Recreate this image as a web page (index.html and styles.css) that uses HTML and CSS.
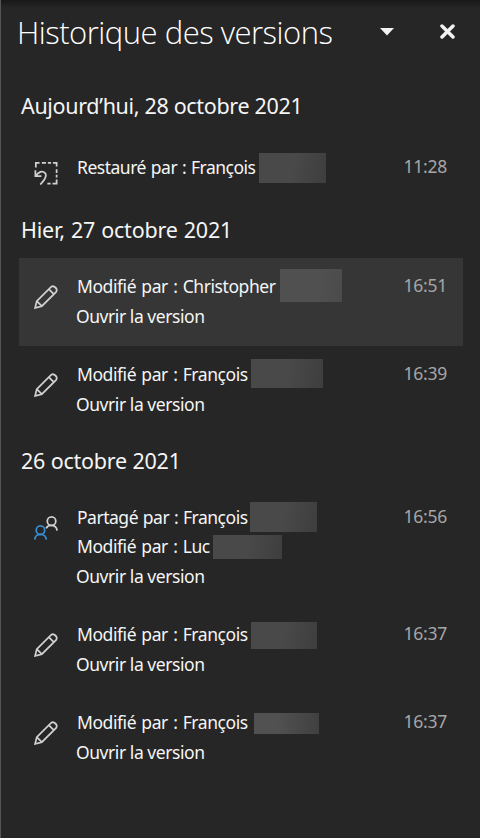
FILE: index.html
```html
<!DOCTYPE html>
<html lang="fr">
<head>
<meta charset="utf-8">
<title>Historique des versions</title>
<link rel="stylesheet" href="styles.css">
</head>
<body>
<svg class="defs" aria-hidden="true">
  <symbol id="pencil" viewBox="0 0 26 26">
    <path d="M1.2 24.8 3 17.5 18.5 2Q20.8.4 23.2 2.7T24 7.4L8.5 23Z M3 17.5 8.5 23 M16 4.5 21.5 10"/>
  </symbol>
  <symbol id="restore" viewBox="0 0 26 26">
    <path d="M2 7V2H6 M8.5 2H13 M15 2H18.5 M20.5 2H24.5V6 M24.5 9V13 M24.5 15V18 M24.5 20V24.5H20 M18 24.5H14.5 M1.5 10V16.5H8 M1.5 16.5C5 11.5 9 10 11.8 12.8S12 20 6.8 25.5"/>
  </symbol>
  <symbol id="people" viewBox="0 0 26 26">
    <g><circle cx="19" cy="5.6" r="4.6"/><path d="M13.2 13.4C15 9 24 8.4 25 15.8"/></g>
    <g class="front"><circle cx="7" cy="15.4" r="4.6"/><path d="M.8 25.6C1.2 18 12.8 18 13.3 25.6"/></g>
  </symbol>
</svg>
<main class="pane">
  <header class="header">
    <h1>Historique des versions</h1>
    <svg class="arrow" viewBox="0 0 14 8"><path d="M0 0H14L7 7.5Z"/></svg>
    <svg class="close" viewBox="0 0 15 15"><path d="M2 2 13 13M13 2 2 13"/></svg>
  </header>
  <section>
    <h2>Aujourd’hui, 28 octobre 2021</h2>
    <article class="entry single">
      <svg class="icon"><use href="#restore"/></svg>
      <div class="details"><p><span class="tight">Restauré par : François</span><i class="mask m1"></i></p></div>
      <time>11:28</time>
    </article>
  </section>
  <section>
    <h2 class="h-yesterday">Hier, 27 octobre 2021</h2>
    <article class="entry selected">
      <svg class="icon"><use href="#pencil"/></svg>
      <div class="details"><p><span>Modifié par : Christopher</span><i class="mask m2"></i></p><a>Ouvrir la version</a></div>
      <time>16:51</time>
    </article>
    <article class="entry">
      <svg class="icon"><use href="#pencil"/></svg>
      <div class="details"><p><span>Modifié par : François</span><i class="mask m3"></i></p><a>Ouvrir la version</a></div>
      <time>16:39</time>
    </article>
  </section>
  <section>
    <h2 class="h-older">26 octobre 2021</h2>
    <article class="entry shared">
      <svg class="icon"><use href="#people"/></svg>
      <div class="details"><p><span class="tight">Partagé par : François</span><i class="mask m4"></i></p><p><span>Modifié par : Luc</span><i class="mask m5"></i></p><a>Ouvrir la version</a></div>
      <time>16:56</time>
    </article>
    <article class="entry">
      <svg class="icon"><use href="#pencil"/></svg>
      <div class="details"><p><span>Modifié par : François</span><i class="mask m6"></i></p><a>Ouvrir la version</a></div>
      <time>16:37</time>
    </article>
    <article class="entry">
      <svg class="icon"><use href="#pencil"/></svg>
      <div class="details"><p><span>Modifié par : François</span><i class="mask m7"></i></p><a>Ouvrir la version</a></div>
      <time>16:37</time>
    </article>
  </section>
</main>
</body>
</html>
```
FILE: styles.css
```css
* { box-sizing: border-box; }
body { margin: 0; background: #262626; color: #f5f5f5; font-family: "Noto Sans", "Open Sans", sans-serif; }
h1, h2, p { margin: 0; font-weight: 400; white-space: nowrap; }
.defs { position: absolute; width: 0; height: 0; }
.pane {
  height: 838px;
  overflow: hidden;
  border-left: 1px solid #555;
  background: linear-gradient(#181818, #262626 8px);
}
.header { display: flex; height: 80px; padding: 12px 0 0 16px; }
h1 { width: 363px; font-family: "Open Sans", sans-serif; font-size: 31px; line-height: 41px; font-weight: 300; letter-spacing: -0.5px; color: #fff; }
.arrow { width: 14px; height: 8px; margin-top: 16px; fill: #f2f2f2; }
.close { width: 15px; height: 15px; margin: 12px 0 0 46px; fill: none; stroke: #f2f2f2; stroke-width: 3.5; stroke-linecap: round; }
h2 { height: 59px; padding-left: 20px; font-size: 21.5px; line-height: 51px; letter-spacing: -0.33px; }
.h-yesterday { height: 60px; line-height: 63px; letter-spacing: -0.2px; word-spacing: 0.7px; }
.h-older { height: 55px; line-height: 53px; letter-spacing: -0.25px; word-spacing: 0.3px; }
.entry {
  display: grid;
  grid-template-columns: 57px 1fr auto;
  height: 88px;
  margin: 0 17px 0 18px;
  padding: 14px 16px 0 0;
}
.single { height: 59px; }
.shared { height: 117px; }
.selected { background: #363636; }
.icon { width: 24px; height: 24px; margin: 13px 0 0 15px; fill: none; stroke: #d0d0d0; stroke-width: 1.9; overflow: visible; }
.single .icon { margin-top: 8px; }
.shared .icon { margin-top: 13px; }
.front { stroke: #3490d8; }
.details { font-size: 17.5px; line-height: 29px; }
.details p { position: relative; height: 30px; padding-left: 1px; }
.shared p { height: 29px; }
.shared a { padding-top: 1px; }
.details span, .details a { letter-spacing: -0.44px; }
.details span { word-spacing: 1.2px; }
.details .tight { letter-spacing: -0.48px; word-spacing: 0.7px; }
.details a { display: block; }
time { font-size: 17.5px; line-height: 27px; color: #a6a6a6; letter-spacing: -0.25px; }
.mask { position: absolute; background: linear-gradient(100deg, #494949 50%, #3e3e3e); }
.m1 { left: 183px; top: 0; width: 67px; height: 30px; }
.m2 { left: 204px; top: -3px; width: 62px; height: 33px; background: linear-gradient(100deg, #505050 60%, #4b4b4b); }
.m3 { left: 175px; top: -1px; width: 72px; height: 29px; }
.m4 { left: 174px; top: -1px; width: 67px; height: 30px; }
.m5 { left: 137px; top: 3px; width: 69px; height: 24px; }
.m6 { left: 175px; top: 2px; width: 66px; height: 27px; }
.m7 { left: 178px; top: 5px; width: 65px; height: 21px; background: linear-gradient(90deg, #515151 35%, #404040); }
```
